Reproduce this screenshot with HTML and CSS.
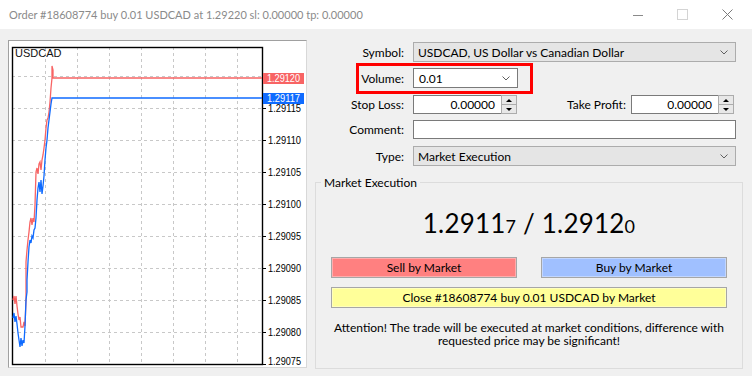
FILE: index.html
```html
<!DOCTYPE html>
<html lang="en">
<head>
  <meta charset="UTF-8" />
  <title>Order #18608774 buy 0.01 USDCAD</title>
  <meta name="viewport" content="width=device-width, initial-scale=1" />
  <link rel="stylesheet" href="styles.css">
</head>
<body>
  <!-- window title -->
  <header class="titlebar">
    <span class="title">Order #18608774 buy 0.01 USDCAD at 1.29220 sl: 0.00000 tp: 0.00000</span>
    <span class="win-btn">
      <svg width="10" height="10" viewBox="0 0 10 10"><path d="M0 5.5h10" stroke="#8a8a8a" stroke-width="1" /></svg>
    </span>
    <span class="win-btn">
      <svg width="11" height="11" viewBox="0 0 11 11"><rect x="0.5" y="0.5" width="10" height="10" fill="none" stroke="#d4d4d4" /></svg>
    </span>
    <span class="win-btn">
      <svg width="11" height="11" viewBox="0 0 11 11"><path d="M0.5 0.5l10 10M10.5 0.5l-10 10" stroke="#7a7a7a" stroke-width="1" /></svg>
    </span>
  </header>

  <main class="dialog">
    <!-- tick chart -->
    <div class="chart">
      <svg width="297" height="326" viewBox="9 41 297 326" xmlns="http://www.w3.org/2000/svg">
        <g class="grid">
          <path d="M45 47V364M77 47V364M109 47V364M141 47V364M173 47V364M205 47V364M237 47V364" />
          <path d="M12 76H262M12 108H262M12 140H262M12 172H262M12 204H262M12 236H262M12 268H262M12 300H262M12 332H262" />
        </g>
        <rect class="frame" x="12.5" y="47.5" width="250" height="317" />
        <path class="ticks" d="M262 108h4M262 140h4M262 172h4M262 204h4M262 236h4M262 268h4M262 300h4M262 332h4M262 364h4" />

        <polyline class="ask" points="13,300 14,296 15,304 16,296 17,306 18,314 19,320 20,317 21,327 23,327 24,322 25,326 26,300 26,262 27,250 28,240 29,232 30,222 31,218 32,225 33,218 34,222 35,205 36,172 37,168 38,174 39,164 40,162 41,170 42,160 43,155 44,148 45,140 46,128 47,120 48,118 49,112 50,102 51,88 52,78 52,66 53,70 53,78 262,78" />
        <polyline class="bid" points="13,318 14,313 15,322 16,316 17,324 18,333 19,340 20,347 21,338 22,346 23,340 24,343 25,326 26,300 27,292 27,280 28,262 29,247 30,240 31,243 32,236 33,238 34,230 35,228 36,218 37,200 38,188 39,182 40,192 41,180 42,194 43,186 44,176 45,160 46,148 47,140 48,128 49,120 50,112 51,104 52,98 262,98" />

        <text class="sym" x="15" y="57">USDCAD</text>

        <g class="axis">
          <text x="268" y="112" textLength="33" lengthAdjust="spacingAndGlyphs">1.29115</text>
          <text x="268" y="144" textLength="33" lengthAdjust="spacingAndGlyphs">1.29110</text>
          <text x="268" y="176" textLength="33" lengthAdjust="spacingAndGlyphs">1.29105</text>
          <text x="268" y="208" textLength="33" lengthAdjust="spacingAndGlyphs">1.29100</text>
          <text x="268" y="240" textLength="33" lengthAdjust="spacingAndGlyphs">1.29095</text>
          <text x="268" y="272" textLength="33" lengthAdjust="spacingAndGlyphs">1.29090</text>
          <text x="268" y="304" textLength="33" lengthAdjust="spacingAndGlyphs">1.29085</text>
          <text x="268" y="336" textLength="33" lengthAdjust="spacingAndGlyphs">1.29080</text>
          <text x="268" y="365" textLength="33" lengthAdjust="spacingAndGlyphs">1.29075</text>
        </g>

        <rect x="263" y="73" width="41" height="11" fill="#f86464" />
        <text class="tag" x="267" y="82" textLength="33" lengthAdjust="spacingAndGlyphs">1.29120</text>
        <rect x="263" y="93" width="41" height="11" fill="#0f6bff" />
        <text class="tag" x="267" y="102" textLength="33" lengthAdjust="spacingAndGlyphs">1.29117</text>
      </svg>
    </div>

    <!-- order form -->
    <section class="order">
      <div class="row r-symbol">
        <span class="lbl">Symbol:</span>
        <div class="select wide">
          <span>USDCAD, US Dollar vs Canadian Dollar</span>
          <svg class="chev" width="8" height="5" viewBox="0 0 8 5"><path d="M0.5 0.5l3.5 3.5 3.5-3.5" /></svg>
        </div>
      </div>

      <div class="row r-volume">
        <span class="lbl">Volume:</span>
        <div class="input volume">
          <span>0.01</span>
          <svg class="chev" width="8" height="5" viewBox="0 0 8 5"><path d="M0.5 0.5l3.5 3.5 3.5-3.5" /></svg>
        </div>
        <div class="mark"></div>
      </div>

      <div class="row r-stops">
        <span class="lbl">Stop Loss:</span>
        <div class="spin">
          <span class="input num">0.00000</span>
          <span class="spin-btns"><i class="up"></i><i class="down"></i></span>
        </div>
        <span class="tp-lbl">Take Profit:</span>
        <div class="spin tp">
          <span class="input num">0.00000</span>
          <span class="spin-btns"><i class="up"></i><i class="down"></i></span>
        </div>
      </div>

      <div class="row r-comment">
        <span class="lbl">Comment:</span>
        <div class="input wide"></div>
      </div>

      <div class="row r-type">
        <span class="lbl">Type:</span>
        <div class="select wide">
          <span>Market Execution</span>
          <svg class="chev" width="8" height="5" viewBox="0 0 8 5"><path d="M0.5 0.5l3.5 3.5 3.5-3.5" /></svg>
        </div>
      </div>

      <fieldset class="market">
        <legend>Market Execution</legend>
        <div class="quote">1.2911<small>7</small> / 1.2912<small>0</small></div>
        <div class="btn-row">
          <button class="btn sell">Sell by Market</button>
          <button class="btn buy">Buy by Market</button>
        </div>
        <button class="btn close">Close #18608774 buy 0.01 USDCAD by Market</button>
        <p class="note">Attention! The trade will be executed at market conditions, difference with<br>requested price may be significant!</p>
      </fieldset>
    </section>
  </main>
</body>
</html>
```

FILE: styles.css
```css
* { box-sizing: border-box; margin: 0; padding: 0; }

html, body {
  width: 752px;
  height: 376px;
  overflow: hidden;
  background: #f0f0f0;
  font-family: Lato, "Liberation Sans", sans-serif;
  font-size: 12px;
  color: #000;
}

/* title bar */
.titlebar {
  display: flex;
  align-items: center;
  height: 29px;
  background: #fff;
}
.titlebar .title {
  flex: 1;
  padding-left: 9px;
  font-size: 11px;
  color: #8a8a8a;
  white-space: nowrap;
}
.win-btn {
  width: 45px;
  height: 29px;
  display: flex;
  align-items: center;
  justify-content: center;
}
.win-btn:last-child { width: 47px; padding-right: 2px; }

.dialog {
  display: flex;
  padding: 11px 0 0 8px;
}

/* chart */
.chart {
  width: 299px;
  height: 328px;
  background: #fff;
  border: 1px solid #a0a0a0;
  border-right-color: #d8d8d8;
  border-bottom-color: #d8d8d8;
}
.chart svg { display: block; }

.grid path {
  stroke: #c8c8c8;
  stroke-width: 1;
  stroke-dasharray: 3 3;
  fill: none;
  shape-rendering: crispEdges;
}
.frame {
  fill: none;
  stroke: #000;
  stroke-width: 1.4;
}
.ticks { stroke: #000; stroke-width: 1; shape-rendering: crispEdges; }
.ask, .bid {
  fill: none;
  stroke-width: 1.3;
  stroke-linejoin: miter;
}
.ask { stroke: #f86464; }
.bid { stroke: #0f6bff; }

.chart text {
  font-family: "Liberation Sans", Arial, sans-serif;
  font-size: 11.5px;
  fill: #000;
}
.chart .sym { font-size: 11px; fill: #111; }
.chart .tag { fill: #fff; font-size: 11px; }

/* form */
.order {
  width: 429px;
  margin-left: 8px;
  padding-top: 2px;
}
.row {
  display: flex;
  align-items: center;
  height: 20px;
  position: relative;
}
.r-symbol { margin-bottom: 6px; }
.r-volume { margin-bottom: 7px; }
.r-stops { height: 19px; margin-bottom: 6px; }
.r-comment { height: 19px; margin-bottom: 7px; }

.lbl {
  width: 89px;
  margin-right: 9px;
  text-align: right;
  white-space: nowrap;
}

.select, .input {
  height: 100%;
  display: flex;
  align-items: center;
  justify-content: space-between;
  padding: 0 7px 0 4px;
  white-space: nowrap;
}
.select {
  background: #e5e5e5;
  border: 1px solid #acacac;
}
.input {
  background: #fff;
  border: 1px solid #7a7a7a;
}
.wide { width: 323px; }
.volume { width: 105px; padding-left: 5px; }

.chev path {
  fill: none;
  stroke: #606060;
  stroke-width: 1;
}

.mark {
  position: absolute;
  left: 41px;
  top: -5px;
  width: 177px;
  height: 31px;
  border: 3px solid #f00;
}

.spin {
  display: flex;
  height: 19px;
  width: 104px;
}
.spin.tp { width: 103px; margin-left: 5px; }
.spin .num {
  flex: 1;
  justify-content: flex-end;
  padding-right: 6px;
  border-right: none;
}
.spin-btns {
  width: 16px;
  display: flex;
  flex-direction: column;
  border: 1px solid #acacac;
  background: #e8e8e8;
}
.spin-btns i {
  flex: 1;
  display: flex;
  align-items: center;
  justify-content: center;
}
.spin-btns i.up { border-bottom: 1px solid #acacac; }
.spin-btns i::before {
  content: "";
  border-left: 3px solid transparent;
  border-right: 3px solid transparent;
}
.spin-btns i.up::before { border-bottom: 3px solid #000; }
.spin-btns i.down::before { border-top: 3px solid #000; }

.tp-lbl { margin-left: 50px; white-space: nowrap; }

/* market execution group */
.market {
  margin-top: 9px;
  width: 428px;
  height: 194px;
  border: 1px solid #dcdcdc;
  display: flex;
  flex-direction: column;
  align-items: center;
  padding: 0;
}
.market legend {
  margin-left: 5px;
  padding: 0 3px;
  line-height: 15px;
}

.quote {
  margin-top: 18px;
  font-size: 26px;
  line-height: 30px;
  letter-spacing: 0.2px;
}
.quote small { font-size: 18px; }

.btn {
  font-family: inherit;
  font-size: 12px;
  color: #000;
  height: 21px;
  border: 1px solid #a6a6a6;
  box-shadow: inset 0 0 0 1px rgba(255, 255, 255, 0.35);
  cursor: pointer;
}
.btn-row {
  display: flex;
  gap: 24px;
  margin-top: 16px;
}
.btn-row .btn { width: 186px; }
.sell { background: #ff8080; }
.buy { background: #a0c0ff; }
.close {
  width: 396px;
  margin-top: 9px;
  background: #ffff99;
}

.note {
  margin-top: 13px;
  text-align: center;
  line-height: 13px;
}
```
